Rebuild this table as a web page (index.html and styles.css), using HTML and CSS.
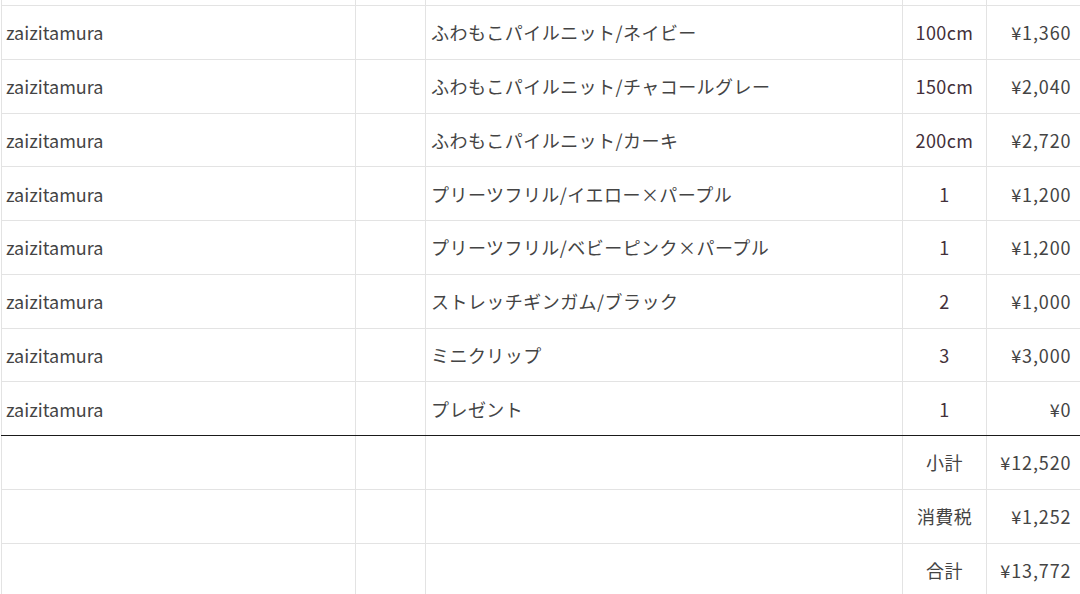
FILE: index.html
```html
<!DOCTYPE html>
<html lang="ja">
<head>
<meta charset="utf-8">
<link rel="stylesheet" href="styles.css">
</head>
<body>
<table class="sheet">
  <colgroup>
    <col class="c-shop"><col class="c-blank"><col class="c-item"><col class="c-qty"><col class="c-price">
  </colgroup>
  <tbody>
    <tr class="stub"><td></td><td></td><td></td><td></td><td></td></tr>
    <tr><td>zaizitamura</td><td></td><td class="item">ふわもこパイルニット/ネイビー</td><td class="qty">100cm</td><td class="price">¥1,360</td></tr>
    <tr><td>zaizitamura</td><td></td><td class="item">ふわもこパイルニット/チャコールグレー</td><td class="qty">150cm</td><td class="price">¥2,040</td></tr>
    <tr><td>zaizitamura</td><td></td><td class="item">ふわもこパイルニット/カーキ</td><td class="qty">200cm</td><td class="price">¥2,720</td></tr>
    <tr><td>zaizitamura</td><td></td><td class="item">プリーツフリル/イエロー×パープル</td><td class="qty">1</td><td class="price">¥1,200</td></tr>
    <tr><td>zaizitamura</td><td></td><td class="item">プリーツフリル/ベビーピンク×パープル</td><td class="qty">1</td><td class="price">¥1,200</td></tr>
    <tr><td>zaizitamura</td><td></td><td class="item">ストレッチギンガム/ブラック</td><td class="qty">2</td><td class="price">¥1,000</td></tr>
    <tr><td>zaizitamura</td><td></td><td class="item">ミニクリップ</td><td class="qty">3</td><td class="price">¥3,000</td></tr>
    <tr class="last"><td>zaizitamura</td><td></td><td class="item">プレゼント</td><td class="qty">1</td><td class="price">¥0</td></tr>
    <tr><td></td><td></td><td></td><td class="label">小計</td><td class="price">¥12,520</td></tr>
    <tr><td></td><td></td><td></td><td class="label">消費税</td><td class="price">¥1,252</td></tr>
    <tr><td></td><td></td><td></td><td class="label">合計</td><td class="price">¥13,772</td></tr>
  </tbody>
</table>
</body>
</html>
```
FILE: styles.css
```css
html, body {
  margin: 0;
  padding: 0;
  background: #ffffff;
  overflow: hidden;
}

.sheet {
  border-collapse: collapse;
  table-layout: fixed;
  width: 1079px;
  margin-left: 1px;
  font-family: "Noto Sans CJK JP", "Noto Sans", sans-serif;
  font-size: 18px;
  color: #444444;
}

.c-shop { width: 354px; }
.c-blank { width: 70px; }
.c-item { width: 477px; }
.c-qty { width: 84px; }
.c-price { width: 94px; }

.sheet td {
  border: 1px solid #e3e3e3;
  height: 52.75px;
  padding: 0 0 0 4px;
  vertical-align: middle;
  white-space: nowrap;
  line-height: 1;
}

.sheet tr.stub td {
  height: 5px;
  border-top: none;
}

.sheet tr.last td {
  border-bottom: 1px solid #1a1a1a;
}

.sheet td.item {
  padding-left: 5px;
  letter-spacing: 0.45px;
}

.sheet td.qty,
.sheet td.label {
  text-align: center;
  padding: 0;
  color: #43303a;
  letter-spacing: 0.4px;
}

.sheet td.label {
  color: #444444;
}

.sheet td.price {
  text-align: right;
  padding: 0 9px 0 0;
  letter-spacing: 0.9px;
  border-right: none;
}
```
